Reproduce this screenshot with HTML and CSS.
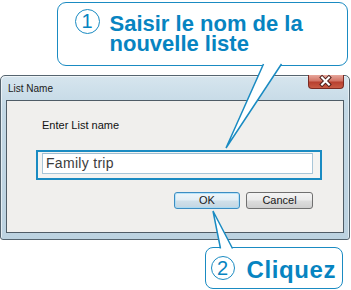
FILE: index.html
```html
<!DOCTYPE html>
<html lang="fr">
<head>
<meta charset="utf-8">
<title>List Name</title>
<link rel="stylesheet" href="styles.css">
</head>
<body>
<div class="page">
  <div class="callout callout-top">
    <span class="num">1</span>
    <p class="callout-text">Saisir le nom de la<br>nouvelle liste</p>
  </div>

  <div class="window">
    <div class="titlebar">
      <span class="title">List Name</span>
      <span class="close">
        <svg width="36" height="14" viewBox="0 0 36 14">
          <path d="M14.5 3.5 L21.5 10.5 M21.5 3.5 L14.5 10.5" stroke="#4b1c18" stroke-width="4.2" stroke-linecap="square" fill="none"/>
          <path d="M14.5 3.5 L21.5 10.5 M21.5 3.5 L14.5 10.5" stroke="#ffffff" stroke-width="2.2" stroke-linecap="square" fill="none"/>
        </svg>
      </span>
    </div>
    <div class="client">
      <p class="label">Enter List name</p>
      <div class="highlight">
        <div class="field">Family trip</div>
      </div>
      <div class="buttons">
        <button class="btn btn-ok">OK</button>
        <button class="btn">Cancel</button>
      </div>
    </div>
  </div>

  <div class="callout callout-bottom">
    <span class="num">2</span>
    <span class="callout-text">Cliquez</span>
  </div>

  <svg class="tails" width="351" height="290" viewBox="0 0 351 290">
    <path d="M263.5 64 L226 148 L281.5 64" fill="#ffffff" stroke="#1a8bc2" stroke-width="1.5" stroke-linejoin="miter"/>
    <path d="M220.5 248.5 L213 211 L232.5 248.5" fill="#ffffff" stroke="#1a8bc2" stroke-width="1.5" stroke-linejoin="miter"/>
  </svg>
</div>
</body>
</html>
```

FILE: styles.css
```css
html, body {
  margin: 0;
  padding: 0;
  background: #ffffff;
}

.page {
  position: relative;
  width: 351px;
  height: 290px;
  overflow: hidden;
  background: #ffffff;
  font-family: "Liberation Sans", Arial, sans-serif;
}

/* Callouts */
.callout {
  box-sizing: border-box;
  border: 1.5px solid #1a8bc2;
  background: #ffffff;
  display: flex;
  color: #0784c1;
}

.callout-top {
  margin: 2px 0 0 57px;
  width: 291px;
  height: 64px;
  border-radius: 9px;
  align-items: flex-start;
  padding: 5.5px 0 0 16.5px;
}

.num {
  box-sizing: border-box;
  flex: none;
  width: 25px;
  height: 25px;
  border: 1.5px solid #1a8bc2;
  border-radius: 50%;
  display: flex;
  align-items: center;
  justify-content: center;
  font-size: 20px;
  line-height: 1;
  font-weight: normal;
  color: #0784c1;
}

.callout-top .callout-text {
  margin: 5px 0 0 10px;
  font-size: 22px;
  line-height: 20.5px;
  font-weight: bold;
}

.callout-bottom {
  margin: 7px 0 0 205px;
  width: 138px;
  height: 42px;
  border-radius: 8px;
  align-items: center;
  padding: 0 0 0 4.5px;
}

.callout-bottom .num {
  width: 24px;
  height: 24px;
}

.callout-bottom .callout-text {
  margin: 3px 0 0 12px;
  font-size: 24px;
  font-weight: bold;
  letter-spacing: 0.6px;
}

/* Window */
.window {
  box-sizing: border-box;
  margin-top: 9px;
  width: 350px;
  height: 165px;
  border: 1px solid #55646f;
  border-radius: 5px 5px 3px 3px;
  padding: 0 5px 6px;
  background: linear-gradient(to bottom, #d6e5ee 0%, #c3d8e5 20%, #bcd2e0 100%);
  box-shadow: inset 1px 1px 0 rgba(255,255,255,0.6), inset -1px 0 0 rgba(255,255,255,0.5);
}

.titlebar {
  height: 24px;
  display: flex;
  align-items: center;
  justify-content: space-between;
}

.title {
  padding-left: 2px;
  font-size: 10px;
  color: #1a1a1a;
}

.close {
  align-self: flex-start;
  margin-top: -1px;
  box-sizing: border-box;
  width: 36px;
  height: 14px;
  border: 1px solid #7b2b23;
  border-top: none;
  border-radius: 0 0 4px 4px;
  background: linear-gradient(to bottom, #e7a79c 0%, #d27466 45%, #b8402f 55%, #c85a44 100%);
  display: flex;
}

.close svg {
  display: block;
  margin: -1px 0 0 -1px;
}

.client {
  box-sizing: border-box;
  height: 133px;
  border: 1px solid #4f5c66;
  background: #f0efed;
}

.label {
  margin: 0;
  padding: 18px 0 0 35px;
  font-size: 11px;
  line-height: 13px;
  color: #111111;
}

.highlight {
  box-sizing: border-box;
  margin: 18px 0 0 29px;
  width: 286px;
  height: 30px;
  border: 2px solid #1a8bc2;
  padding: 1px 7px 4px 4px;
  background: #f4f4f2;
}

.field {
  box-sizing: border-box;
  height: 21px;
  border: 1px solid #a8c6d8;
  border-top-color: #9dbdd1;
  background: #ffffff;
  padding-left: 3px;
  font-size: 14px;
  line-height: 19px;
  color: #3c3c3c;
  letter-spacing: 0.3px;
}

.buttons {
  display: flex;
  justify-content: flex-end;
  gap: 6px;
  margin-top: 12px;
  padding-right: 30px;
}

.btn {
  box-sizing: border-box;
  width: 67px;
  height: 17px;
  margin: 0;
  padding: 0;
  border: 1px solid #707070;
  border-radius: 3px;
  background: linear-gradient(to bottom, #f4f4f4 0%, #ebebeb 48%, #dddddd 52%, #cfcfcf 100%);
  font-family: "Liberation Sans", Arial, sans-serif;
  font-size: 11px;
  line-height: 15px;
  color: #1a1a1a;
}

.btn-ok {
  width: 66px;
  border-color: #3c8dc2;
  background: linear-gradient(to bottom, #eef6fb 0%, #e3eef5 48%, #d0e0ea 52%, #c3d6e2 100%);
  box-shadow: inset 0 0 0 1px rgba(160,220,250,0.7);
}

/* Callout pointers drawn over the dialog */
.tails {
  position: absolute;
  left: 0;
  top: 0;
  pointer-events: none;
}
```
